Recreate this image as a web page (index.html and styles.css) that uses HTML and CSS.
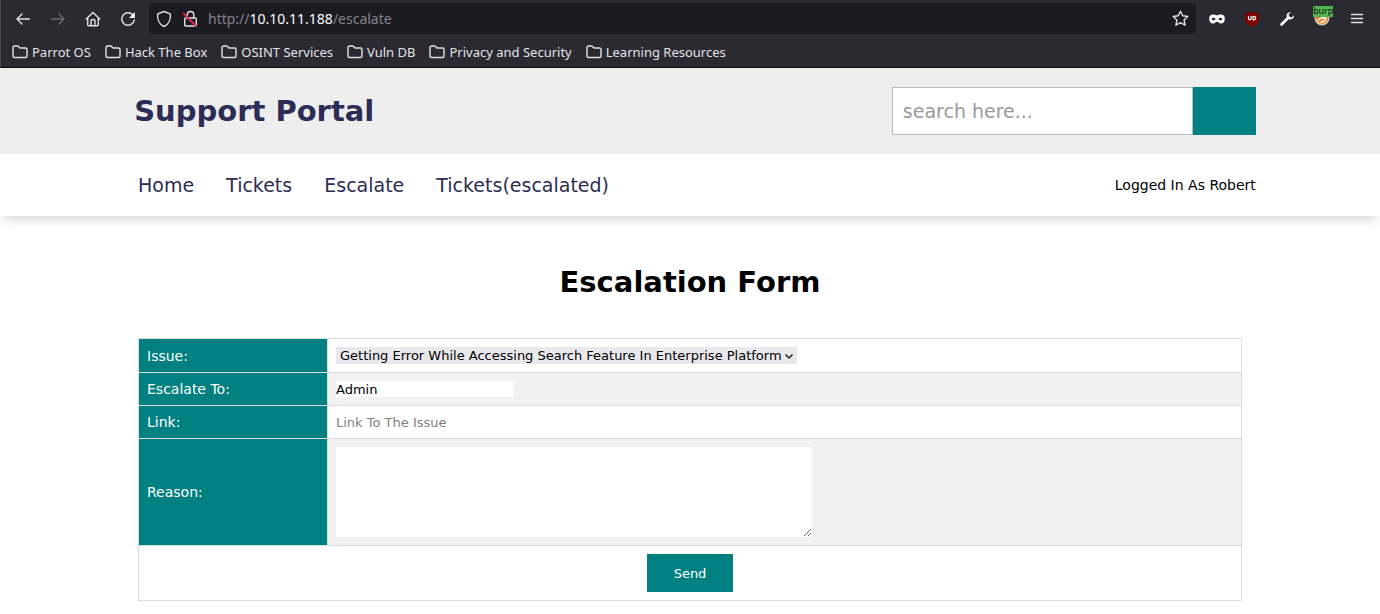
FILE: index.html
```
<!DOCTYPE html>
<html lang="en">
<head>
    <meta charset="UTF-8">
    <meta name="viewport" content="width=device-width, initial-scale=1.0">
    <title>Support Portal</title>
    <link rel="stylesheet" href="styles.css">
</head>
<body>
    <!-- Browser chrome -->
    <div class="browser">
        <div class="toolbar">
            <button class="tool" aria-label="Back">
                <svg width="16" height="16" viewBox="0 0 16 16"><path d="M14.500 8H2M7 3L2 8l5 5"/></svg>
            </button>
            <button class="tool tool-off" aria-label="Forward" disabled>
                <svg width="16" height="16" viewBox="0 0 16 16"><path d="M1.500 8H14M9 3l5 5-5 5"/></svg>
            </button>
            <button class="tool" aria-label="Home">
                <svg width="16" height="16" viewBox="0 0 16 16"><path d="M1.200 8L8 1.500 14.800 8M2.700 7v6.800q0 1 1 1h8.600q1 0 1-1V7M6 14.500V10q0-1.500 2-1.500t2 1.500v4.500"/></svg>
            </button>
            <button class="tool" aria-label="Reload">
                <svg width="16" height="16" viewBox="0 0 16 16"><path d="M14.300 9A6.300 6.300 0 1 1 12.500 3.500"/><path class="solid" d="M14.800 1v6H9z"/></svg>
            </button>
            <div class="address">
                <svg width="16" height="18" viewBox="0 0 16 18"><path d="M8 1.500l6.300 2.300c.6 5-1.300 10.500-6.300 12.700C3 14.300 1.100 8.800 1.700 3.800z"/></svg>
                <svg width="16" height="18" viewBox="0 0 16 18"><path d="M5.200 8V5q0-3.500 3.300-3.500T11.800 5v3M3.700 8h9.600q1 0 1 1v6q0 1-1 1H3.700q-1 0-1-1V9q0-1 1-1"/><path class="slash" d="M1.500 3.500l12.500 12.500"/></svg>
                <span class="url">http://<b>10.10.11.188</b>/escalate</span>
                <svg class="star" width="17" height="17" viewBox="0 0 17 17"><path d="M8.500 1.200l2.200 4.600 5.100.7-3.700 3.500 1 5.200-4.600-2.500-4.600 2.500 1-5.200L1.200 6.500l5.100-.7z"/></svg>
            </div>
            <div class="extensions">
                <button class="tool" aria-label="Private mask">
                    <svg width="16" height="12" viewBox="0 0 16 12"><path class="solid" fill-rule="evenodd" d="M.2 5.500C.2 3 1.800 1.500 4.300 1.500c1.800 0 2.500.8 3.700.8s1.900-.8 3.700-.8c2.500 0 4.100 1.500 4.100 4 0 3.300-1.600 5-3.800 5-2.300 0-2.700-1.700-4-1.700s-1.700 1.700-4 1.700S.2 8.800.2 5.500zm2.300.6c.9 1.800 3.200 1.800 4.200 0-1.200-1.900-3-1.900-4.200 0zm6.800 0c1 1.800 3.300 1.800 4.200 0-1.200-1.900-3-1.900-4.200 0z"/></svg>
                </button>
                <button class="tool" aria-label="uBlock">
                    <svg width="16" height="16" viewBox="0 0 16 16"><path class="shield" d="M8 .5c2 1.300 4.300 1.900 7 2V8c0 3.500-3 5.800-7 7.700C4 13.800 1 11.500 1 8V2.500c2.700-.1 5-.7 7-2z"/><path class="thin" d="M4.500 5.300v2.300q0 1.200 1.300 1.200t1.300-1.200V5.300M9 5.300v3.500h.8q2 0 2-1.700t-2-1.800z"/></svg>
                </button>
                <button class="tool" aria-label="Developer tools">
                    <svg width="16" height="16" viewBox="0 0 16 16"><path class="handle" d="M2.500 13.500l7-7"/><path class="solid" d="M12 1.200C9 .8 7 3.200 7.800 6l2.300 2.300c2.800.8 5.200-1.200 4.900-4l-2.300 2.200-2.300-.8-.8-2.300z"/></svg>
                </button>
                <button class="tool" aria-label="Proxy">
                    <svg width="18" height="16" viewBox="0 0 18 16"><circle cx="9" cy="7" r="7.500" fill="#d9c9b4" stroke="none"/><circle cx="9" cy="7" r="6" fill="#e8761d" stroke="none"/><path d="M5 9q4-3 8-2-1 3-5 4" stroke="#fff"/><path d="M4 10q4 4 9 0" stroke="#f6bd79"/></svg>
                    <span class="badge">burp</span>
                </button>
                <button class="tool" aria-label="Menu">
                    <svg width="14" height="14" viewBox="0 0 14 14"><path d="M1.500 2.500h11M1.500 6.500h11M1.500 10.500h11"/></svg>
                </button>
            </div>
        </div>
        <div class="bookmarks">
            <a href="#"><svg width="16" height="14" viewBox="0 0 16 14"><path d="M1 11V2.500Q1 1 2.500 1H6l2 2h5.500Q15 3 15 4.500V11q0 1.500-1.500 1.500h-11Q1 12.500 1 11z"/></svg>Parrot OS</a>
            <a href="#"><svg width="16" height="14" viewBox="0 0 16 14"><path d="M1 11V2.500Q1 1 2.500 1H6l2 2h5.500Q15 3 15 4.500V11q0 1.500-1.500 1.500h-11Q1 12.500 1 11z"/></svg>Hack The Box</a>
            <a href="#"><svg width="16" height="14" viewBox="0 0 16 14"><path d="M1 11V2.500Q1 1 2.500 1H6l2 2h5.500Q15 3 15 4.500V11q0 1.500-1.500 1.500h-11Q1 12.500 1 11z"/></svg>OSINT Services</a>
            <a href="#"><svg width="16" height="14" viewBox="0 0 16 14"><path d="M1 11V2.500Q1 1 2.500 1H6l2 2h5.500Q15 3 15 4.500V11q0 1.500-1.500 1.500h-11Q1 12.500 1 11z"/></svg>Vuln DB</a>
            <a href="#"><svg width="16" height="14" viewBox="0 0 16 14"><path d="M1 11V2.500Q1 1 2.500 1H6l2 2h5.500Q15 3 15 4.500V11q0 1.500-1.500 1.500h-11Q1 12.500 1 11z"/></svg>Privacy and Security</a>
            <a href="#"><svg width="16" height="14" viewBox="0 0 16 14"><path d="M1 11V2.500Q1 1 2.500 1H6l2 2h5.500Q15 3 15 4.500V11q0 1.500-1.500 1.500h-11Q1 12.500 1 11z"/></svg>Learning Resources</a>
        </div>
    </div>

    <header class="header">
        <div class="brand">Support Portal</div>
        <form class="search">
            <input type="text" placeholder="search here..." aria-label="Search">
            <button type="submit" aria-label="Search"></button>
        </form>
    </header>

    <nav class="nav">
        <a href="#">Home</a>
        <a href="#">Tickets</a>
        <a href="#">Escalate</a>
        <a href="#">Tickets(escalated)</a>
        <span class="user">Logged In As Robert</span>
    </nav>

    <main class="main">
        <h1>Escalation Form</h1>
        <form>
            <table class="form-table">
                <tr>
                    <th><label for="issue">Issue:</label></th>
                    <td>
                        <span class="select-wrap">
                            <select id="issue">
                                <option>Getting Error While Accessing Search Feature In Enterprise Platform</option>
                            </select>
                            <svg width="10" height="10" viewBox="0 0 10 10"><path d="M1.500 3.500L5 7l3.500-3.500"/></svg>
                        </span>
                    </td>
                </tr>
                <tr>
                    <th><label for="escalate-to">Escalate To:</label></th>
                    <td><input type="text" id="escalate-to" value="Admin" readonly></td>
                </tr>
                <tr>
                    <th><label for="link">Link:</label></th>
                    <td><input type="text" id="link" placeholder="Link To The Issue"></td>
                </tr>
                <tr>
                    <th><label for="reason">Reason:</label></th>
                    <td><textarea id="reason"></textarea></td>
                </tr>
                <tr>
                    <td colspan="2" class="actions"><button type="submit">Send</button></td>
                </tr>
            </table>
        </form>
    </main>
</body>
</html>
```
FILE: styles.css
```
* {
    box-sizing: border-box;
}
body {
    margin: 0;
    font-family: "DejaVu Sans", Verdana, sans-serif;
    font-size: 14px;
    background: #fff;
    color: #000;
}
input, select, textarea, button {
    font-family: inherit;
    border: none;
    border-radius: 0;
    margin: 0;
    padding: 0;
    outline: none;
}

/* Browser chrome */
.browser {
    background: #2b2a33;
    color: #e3e3e6;
    font-family: "Noto Sans", sans-serif;
    font-size: 13px;
    border-left: 1px solid #4a4951;
    border-bottom: 1px solid #0c0c0d;
}
.browser svg {
    display: block;
    flex: none;
    fill: none;
    stroke: #e3e3e6;
    stroke-width: 1.4;
    stroke-linecap: round;
    stroke-linejoin: round;
}
.browser .solid {
    fill: #fff;
    stroke: none;
}
.browser .slash {
    stroke: #e22850;
    stroke-width: 1.8;
}
.browser .shield {
    fill: #800000;
    stroke: none;
}
.browser .thin {
    stroke-width: 1.2;
    stroke: #fff;
}
.browser .handle {
    stroke: #fff;
    stroke-width: 2.6;
}
.toolbar {
    display: flex;
    align-items: center;
    height: 37px;
    padding: 0 14px;
}
.tool {
    display: flex;
    align-items: center;
    justify-content: center;
    width: 16px;
    height: 32px;
    margin-right: 19px;
    background: none;
}
.tool-off {
    opacity: 0.35;
}
.address {
    flex: 1;
    display: flex;
    align-items: center;
    gap: 10px;
    height: 31px;
    margin-left: -6px;
    padding: 0 7px;
    background: #1c1b22;
    border-radius: 4px;
}
.url {
    flex: 1;
    font-size: 14px;
    color: #85848b;
}
.url b {
    font-weight: normal;
    color: #fbfbfe;
}
.extensions {
    display: flex;
    padding-left: 12px;
}
.extensions .tool {
    position: relative;
    width: 18px;
    margin-right: 17px;
}
.extensions .tool:last-child {
    margin-right: 0;
}
.badge {
    position: absolute;
    top: 3px;
    left: 0;
    width: 20px;
    height: 11px;
    background: #52b552;
    color: #111;
    font-size: 9px;
    line-height: 9px;
}
.bookmarks {
    display: flex;
    align-items: center;
    gap: 14px;
    height: 30px;
    padding: 0 11px;
}
.bookmarks a {
    display: flex;
    align-items: center;
    gap: 4px;
    color: inherit;
    text-decoration: none;
    white-space: nowrap;
}

/* Site header */
.header {
    display: flex;
    align-items: center;
    justify-content: space-between;
    padding: 19px 9%;
    background: #eee;
}
.brand {
    padding-left: 10px;
    font-size: 29px;
    font-weight: bold;
    color: #2c2c54;
}
.search {
    display: flex;
}
.search input {
    width: 301px;
    height: 48px;
    padding: 0 10px;
    border: 1px solid #bbb;
    font-size: 19px;
    background: #fff;
}
.search input::placeholder {
    color: #999;
}
.search button {
    width: 63px;
    background: #008080;
}

.nav {
    display: flex;
    align-items: center;
    gap: 32px;
    height: 62px;
    padding: 0 9% 0 10%;
    box-shadow: 0 8px 10px -4px rgba(0, 0, 0, 0.15);
}
.nav a {
    font-size: 19px;
    color: #2c2c54;
    text-decoration: none;
}
.user {
    margin-left: auto;
}

/* Escalation form */
.main {
    padding: 49px 10% 13px;
}
h1 {
    margin: 0 0 39px;
    font-size: 29px;
    line-height: 34px;
    text-align: center;
}
.form-table {
    width: 100%;
    border-collapse: collapse;
}
.form-table tr:nth-child(even) {
    background: #f1f1f1;
}
.form-table th, .form-table td {
    border: 1px solid #ddd;
    padding: 8px;
    text-align: left;
    line-height: 16px;
}
.form-table th {
    width: 189px;
    background: #008080;
    color: #fff;
    font-weight: normal;
}
.form-table input, .form-table select, .form-table textarea {
    display: block;
    font-size: 13px;
    color: #000;
    background: #fff;
}
.form-table input {
    width: 177px;
    height: 16px;
}
.form-table input::placeholder {
    color: #808080;
}
.select-wrap {
    display: inline-grid;
    align-items: center;
    vertical-align: top;
    background: #e9e9ed;
}
.select-wrap select, .select-wrap svg {
    grid-area: 1 / 1;
}
.form-table .select-wrap select {
    appearance: none;
    height: 17px;
    padding: 0 15px 0 4px;
    background: none;
}
.select-wrap svg {
    justify-self: end;
    margin-right: 3px;
    fill: none;
    stroke: #222;
    stroke-width: 1.5;
    pointer-events: none;
}
.form-table textarea {
    width: 476px;
    height: 90px;
}
.form-table .actions {
    text-align: center;
}
.actions button {
    width: 86px;
    height: 38px;
    display: block;
    margin: 0 auto;
    background: #008080;
    color: #fff;
    font-size: 13px;
}
```
